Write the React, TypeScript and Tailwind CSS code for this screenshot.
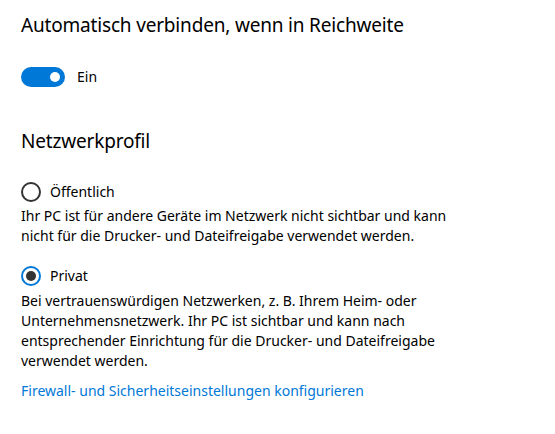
import React from "react";

export default function App() {
  const font = { fontFamily: '"Noto Sans", "Open Sans", sans-serif' };
  return (
    <div className="w-[555px] h-[434px] bg-white text-black pl-[21px] pt-[11px]" style={font}>
      <h2 className="text-[19px] leading-[28px] font-normal tracking-[-0.18px] text-black">
        Automatisch verbinden, wenn in Reichweite
      </h2>
      <div className="mt-[28px] flex items-center h-[20px]">
        <div className="w-[44px] h-[20px] rounded-full bg-[#0078d7] flex items-center justify-end pr-[5px]">
          <div className="w-[10px] h-[10px] rounded-full bg-white" />
        </div>
        <span className="ml-[12px] text-[14px] leading-[20px] text-black">Ein</span>
      </div>
      <h2 className="mt-[40px] text-[19px] leading-[28px] font-normal tracking-[-0.18px] text-black">Netzwerkprofil</h2>
      <div className="mt-[27px] flex items-center h-[20px]">
        <div className="w-[20px] h-[20px] rounded-full border-2 border-[#333]" />
        <span className="ml-[9px] text-[14px] leading-[20px] text-black">Öffentlich</span>
      </div>
      <p className="mt-[4px] w-[440px] text-[14px] leading-[20px] text-black">
        Ihr PC ist für andere Geräte im Netzwerk nicht sichtbar und kann nicht für die Drucker- und Dateifreigabe verwendet werden.
      </p>
      <div className="mt-[20px] flex items-center h-[20px]">
        <div className="w-[20px] h-[20px] rounded-full border-2 border-[#0078d7] flex items-center justify-center">
          <div className="w-[10px] h-[10px] rounded-full bg-[#333]" />
        </div>
        <span className="ml-[9px] text-[14px] leading-[20px] text-black">Privat</span>
      </div>
      <p className="mt-[5px] w-[440px] text-[14px] leading-[20px] text-black">
        Bei vertrauenswürdigen Netzwerken, z. B. Ihrem Heim- oder Unternehmensnetzwerk. Ihr PC ist sichtbar und kann nach entsprechender Einrichtung für die Drucker- und Dateifreigabe verwendet werden.
      </p>
      <div className="mt-[10px] text-[14px] leading-[20px] text-[#0078d7]">
        Firewall- und Sicherheitseinstellungen konfigurieren
      </div>
    </div>
  );
}
